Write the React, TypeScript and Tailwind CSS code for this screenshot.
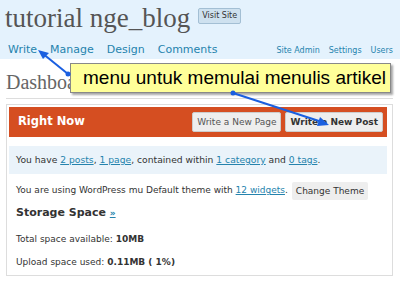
import React from "react";

const sans = { fontFamily: '"DejaVu Sans", Verdana, sans-serif' };

function Link({ children }: { children: React.ReactNode }) {
  return <span className="text-[#2583ad] underline">{children}</span>;
}

export default function App() {
  return (
    <div className="relative w-[400px] h-[281px] overflow-hidden bg-white" style={sans}>
      <div className="h-[59px] bg-[#e4f2fd] pl-[5px] pr-[7px]">
        <div className="flex items-start gap-[8px] pt-[1px]">
          <h1 className="text-[27px] leading-[34px] text-[#555] font-['Liberation_Serif',serif]">
            tutorial nge_blog
          </h1>
          <span className="mt-[7px] h-[16px] px-[3px] border border-[#a3bfd4] bg-[#cee1ef] rounded-[2px] text-[8px] leading-[14px] text-[#333]">
            Visit Site
          </span>
        </div>
        <div className="flex items-end justify-between mt-[7px] pl-[3px] text-[#2583ad]">
          <div className="flex gap-[13px] text-[11px] leading-[15px]">
            <span>Write</span>
            <span>Manage</span>
            <span>Design</span>
            <span>Comments</span>
          </div>
          <div className="flex gap-[9px] text-[8px] leading-[13px]">
            <span>Site Admin</span>
            <span>Settings</span>
            <span>Users</span>
          </div>
        </div>
      </div>

      <div className="pl-[6px] pr-[7px]">
        <h2 className="text-[20px] leading-[26px] mt-[10px] text-[#666] font-['Liberation_Serif',serif]">
          Dashboard
        </h2>
        <div className="mt-[3px] h-px bg-[#ddd]" />
        <div className="mt-[5px] h-[172px] border border-[#ddd] pt-[2px] pl-[2px] pr-[5px]">
          <div className="h-[30px] bg-[#d54e21] flex items-center justify-between pl-[9px] pr-[4px]">
            <span className="text-white font-bold text-[11.5px]">Right Now</span>
            <div className="flex gap-[4px]">
              <span className="h-[20px] px-[4px] bg-[#eee] border border-[#ccc] rounded-[2px] text-[9px] leading-[18px] text-[#555]">
                Write a New Page
              </span>
              <span className="h-[20px] px-[4px] bg-[#eee] border border-[#ccc] rounded-[2px] text-[9px] leading-[18px] text-[#333] font-bold">
                Write a New Post
              </span>
            </div>
          </div>
          <div className="mt-[9px] h-[28px] bg-[#eaf3fa] pl-[7px] flex items-center text-[9.2px] text-[#333]">
            You have&nbsp;<Link>2 posts</Link>,&nbsp;<Link>1 page</Link>, contained within&nbsp;<Link>1 category</Link>&nbsp;and&nbsp;<Link>0 tags</Link>.
          </div>
          <div className="mt-[8px] pl-[7px] flex items-center text-[9px] text-[#333]">
            You are using WordPress mu Default theme with&nbsp;<Link>12 widgets</Link>.
            <span className="ml-[4px] h-[18px] px-[4px] bg-[#eee] rounded-[2px] leading-[18px]">Change Theme</span>
          </div>
          <div className="mt-[4px] pl-[7px] text-[11px] font-bold text-[#333] leading-[18px]">
            Storage Space <span className="text-[#2583ad] underline text-[9px]">»</span>
          </div>
          <div className="mt-[10px] pl-[7px] text-[9px] text-[#333] leading-[14px]">
            Total space available: <b>10MB</b>
          </div>
          <div className="mt-[9px] pl-[7px] text-[9px] text-[#333] leading-[14px]">
            Upload space used: <b>0.11MB ( 1%)</b>
          </div>
        </div>
      </div>

      <div className="absolute left-[70px] top-[63px] w-[321px] h-[30px] bg-[#ffff99] border border-[#888] shadow-[2px_2px_2px_rgba(0,0,0,0.35)] flex items-center pl-[12px] text-[19px] text-black font-['Liberation_Sans',Arial,sans-serif]">
        menu untuk memulai menulis artikel
      </div>

      <svg className="absolute left-0 top-0" width="400" height="281">
        <circle cx="68" cy="74" r="2.5" fill="#1a5fe0" />
        <line x1="68" y1="74" x2="42" y2="53" stroke="#1a5fe0" strokeWidth="2" />
        <path d="M38,50 L49,53 L43,59 Z" fill="#1a5fe0" />
        <circle cx="233" cy="93" r="2.5" fill="#1a5fe0" />
        <line x1="233" y1="93" x2="322" y2="122" stroke="#1a5fe0" strokeWidth="2" />
        <path d="M329,125 L317,126 L320,117 Z" fill="#1a5fe0" />
      </svg>
    </div>
  );
}
